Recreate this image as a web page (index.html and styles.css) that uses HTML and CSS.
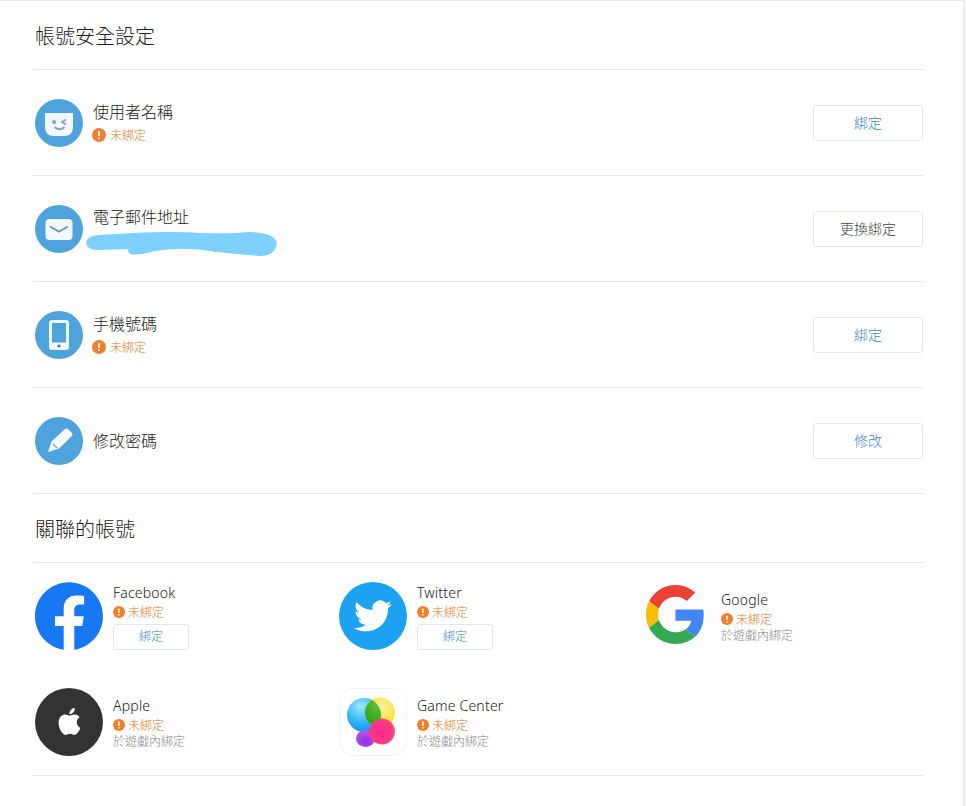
FILE: index.html
```html
<!DOCTYPE html>
<html lang="zh-Hant">
<head>
    <meta charset="UTF-8">
    <meta name="viewport" content="width=device-width, initial-scale=1.0">
    <title>帳號安全設定</title>
    <link rel="stylesheet" href="styles.css">
</head>
<body>
    <svg class="defs" width="0" height="0">
        <symbol id="warn" viewBox="0 0 14 14">
            <circle cx="7" cy="7" r="7" fill="#f07f30"/>
            <rect x="6.100" y="3" width="1.800" height="5.200" rx=".8" fill="#fff"/>
            <circle cx="7" cy="10.200" r="1" fill="#fff"/>
        </symbol>
    </svg>
    <div class="panel">
        <h2 class="sectionTitle">帳號安全設定</h2>
        <div class="bindRow">
            <svg class="rowIcon" viewBox="0 0 48 48">
                <circle cx="24" cy="24" r="24" fill="#4fa3dc"/>
                <path d="M10 14h28v14q0 9-9 9H19q-9 0-9-9z" fill="#f0f8fd"/>
                <circle cx="19" cy="23" r="2" fill="#86a5bd"/>
                <path d="M31 20.500l-4 2.500 4 2.500M19.500 28q5 4.500 10 0" fill="none" stroke="#86a5bd" stroke-width="1.800"/>
            </svg>
            <div class="rowText">
                <p class="rowName">使用者名稱</p>
                <p class="status"><svg class="warnIcon"><use href="#warn"/></svg>未綁定</p>
            </div>
            <button class="btn">綁定</button>
        </div>
        <div class="bindRow">
            <svg class="rowIcon" viewBox="0 0 48 48">
                <circle cx="24" cy="24" r="24" fill="#4fa3dc"/>
                <rect x="10.500" y="14" width="27" height="21" rx="4" fill="#f0f8fd"/>
                <path d="M15 21.500l9 5 9-5" fill="none" stroke="#7396b3" stroke-width="2"/>
            </svg>
            <div class="rowText">
                <p class="rowName">電子郵件地址</p>
                <svg class="scribble" width="194" height="26" viewBox="0 0 194 26">
                    <path d="M1 11Q2 5 14 4L48 2Q90 0 115 2Q145 3 165 1Q190 2 192 12Q190 25 175 25L132 21Q100 15 70 20Q52 25 45 23Q42 20 43 18L12 19Q2 19 1 11Z" fill="#7dd0ff"/>
                </svg>
            </div>
            <button class="btn btnGray">更換綁定</button>
        </div>
        <div class="bindRow">
            <svg class="rowIcon" viewBox="0 0 48 48">
                <circle cx="24" cy="24" r="24" fill="#4fa3dc"/>
                <rect x="14" y="9" width="20" height="30" rx="3" fill="#f0f8fd"/>
                <rect x="17" y="12" width="14" height="19.500" fill="#4fa3dc"/>
                <circle cx="24" cy="35" r="1.600" fill="#5d7f99"/>
            </svg>
            <div class="rowText">
                <p class="rowName">手機號碼</p>
                <p class="status"><svg class="warnIcon"><use href="#warn"/></svg>未綁定</p>
            </div>
            <button class="btn">綁定</button>
        </div>
        <div class="bindRow">
            <svg class="rowIcon" viewBox="0 0 48 48">
                <circle cx="24" cy="24" r="24" fill="#4fa3dc"/>
                <path d="M13 35l3.500-10.500L29.500 12.500q2-1.800 4 0l3 3q1.800 2 0 4L24 31.500z" fill="#f4fafd"/>
                <path d="M18 27l4 4" stroke="#7fa3c0" stroke-width="1.200"/>
            </svg>
            <div class="rowText">
                <p class="rowName">修改密碼</p>
            </div>
            <button class="btn">修改</button>
        </div>

        <h2 class="sectionTitle">關聯的帳號</h2>
        <div class="socialGrid">
            <div class="socialItem">
                <svg class="socialIcon" viewBox="0 0 24 24">
                    <path fill="#1877f2" d="M24 12.073c0-6.627-5.373-12-12-12s-12 5.373-12 12c0 5.990 4.388 10.954 10.125 11.854v-8.385H7.078v-3.470h3.047V9.430c0-3.007 1.792-4.669 4.533-4.669 1.312 0 2.686.235 2.686.235v2.953H15.830c-1.491 0-1.956.925-1.956 1.874v2.250h3.328l-.532 3.470h-2.796v8.385C19.612 23.027 24 18.062 24 12.073z"/>
                </svg>
                <div class="socialText">
                    <p class="socialName">Facebook</p>
                    <p class="status"><svg class="warnIcon"><use href="#warn"/></svg>未綁定</p>
                    <button class="btn btnSmall">綁定</button>
                </div>
            </div>
            <div class="socialItem">
                <svg class="socialIcon" viewBox="0 0 68 68">
                    <circle cx="34" cy="34" r="34" fill="#1da1f2"/>
                    <path transform="translate(15 15) scale(1.580)" fill="#fff" d="M23.953 4.570a10 10 0 01-2.825.775 4.958 4.958 0 002.163-2.723c-.951.555-2.005.959-3.127 1.184a4.920 4.920 0 00-8.384 4.482C7.690 8.095 4.067 6.130 1.640 3.162a4.822 4.822 0 00-.666 2.475c0 1.710.870 3.213 2.188 4.096a4.904 4.904 0 01-2.228-.616v.060a4.923 4.923 0 003.946 4.827 4.996 4.996 0 01-2.212.085 4.936 4.936 0 004.604 3.417 9.867 9.867 0 01-6.102 2.105c-.390 0-.779-.023-1.170-.067a13.995 13.995 0 007.557 2.209c9.053 0 13.998-7.496 13.998-13.985 0-.210 0-.420-.015-.630A9.935 9.935 0 0024 4.590z"/>
                </svg>
                <div class="socialText">
                    <p class="socialName">Twitter</p>
                    <p class="status"><svg class="warnIcon"><use href="#warn"/></svg>未綁定</p>
                    <button class="btn btnSmall">綁定</button>
                </div>
            </div>
            <div class="socialItem">
                <svg class="socialIcon" viewBox="-2.400 -2.400 55.300 55.300">
                    <path fill="#ea4335" d="M24 9.500c3.540 0 6.710 1.220 9.210 3.600l6.850-6.850C35.900 2.380 30.470 0 24 0 14.620 0 6.510 5.380 2.560 13.220l7.980 6.190C12.430 13.720 17.740 9.500 24 9.500z"/>
                    <path fill="#4285f4" d="M46.980 24.550c0-1.570-.150-3.090-.380-4.550H24v9.020h12.940c-.580 2.960-2.260 5.480-4.780 7.180l7.730 6c4.510-4.180 7.090-10.360 7.090-17.650z"/>
                    <path fill="#fbbc05" d="M10.530 28.590c-.480-1.450-.760-2.990-.760-4.590s.270-3.140.760-4.590l-7.980-6.190C.920 16.460 0 20.120 0 24c0 3.880.920 7.540 2.560 10.780l7.970-6.190z"/>
                    <path fill="#34a853" d="M24 48c6.480 0 11.930-2.130 15.890-5.810l-7.730-6c-2.150 1.450-4.920 2.300-8.160 2.300-6.260 0-11.570-4.220-13.470-9.910l-7.980 6.190C6.510 42.620 14.620 48 24 48z"/>
                </svg>
                <div class="socialText">
                    <p class="socialName">Google</p>
                    <p class="status"><svg class="warnIcon"><use href="#warn"/></svg>未綁定</p>
                    <p class="hint">於遊戲內綁定</p>
                </div>
            </div>
            <div class="socialItem">
                <svg class="socialIcon" viewBox="0 0 68 68">
                    <circle cx="34" cy="34" r="34" fill="#333"/>
                    <path transform="translate(21 20) scale(1.120)" fill="#fff" d="M12.152 6.896c-.948 0-2.415-1.078-3.960-1.040-2.040.027-3.910 1.183-4.961 3.014-2.117 3.675-.546 9.103 1.519 12.090 1.013 1.454 2.208 3.090 3.792 3.039 1.520-.065 2.090-.987 3.935-.987 1.831 0 2.350.987 3.960.948 1.637-.026 2.676-1.480 3.676-2.948 1.156-1.688 1.636-3.325 1.662-3.415-.039-.013-3.182-1.221-3.220-4.857-.026-3.040 2.480-4.494 2.597-4.559-1.429-2.090-3.623-2.324-4.390-2.376-2-.156-3.675 1.090-4.610 1.090zM15.530 3.830c.843-1.012 1.400-2.427 1.245-3.830-1.207.052-2.662.805-3.532 1.818-.780.896-1.454 2.338-1.273 3.714 1.338.104 2.715-.688 3.559-1.701"/>
                </svg>
                <div class="socialText">
                    <p class="socialName">Apple</p>
                    <p class="status"><svg class="warnIcon"><use href="#warn"/></svg>未綁定</p>
                    <p class="hint">於遊戲內綁定</p>
                </div>
            </div>
            <div class="socialItem">
                <svg class="socialIcon" viewBox="0 0 68 68">
                    <defs>
                        <radialGradient id="gcBlue" cx=".4" cy=".25" r=".8"><stop offset="0" stop-color="#9fe9ff"/><stop offset=".6" stop-color="#2cb2fb"/><stop offset="1" stop-color="#0f8ff0"/></radialGradient>
                        <radialGradient id="gcYellow" cx=".6" cy=".3" r=".8"><stop offset="0" stop-color="#fff0a0"/><stop offset="1" stop-color="#f5d800"/></radialGradient>
                        <radialGradient id="gcGreen" cx=".5" cy=".2" r=".9"><stop offset="0" stop-color="#6bc43c"/><stop offset="1" stop-color="#159a0a"/></radialGradient>
                        <radialGradient id="gcPink" cx=".45" cy=".5" r=".65"><stop offset="0" stop-color="#ff2591"/><stop offset=".7" stop-color="#fb3d83"/><stop offset="1" stop-color="#fb8a5e"/></radialGradient>
                        <radialGradient id="gcPurple" cx=".5" cy=".7" r=".7"><stop offset="0" stop-color="#8f2de6"/><stop offset="1" stop-color="#b45ae8"/></radialGradient>
                        <clipPath id="gcClip"><circle cx="25" cy="27" r="17"/></clipPath>
                    </defs>
                    <rect x=".500" y=".500" width="67" height="67" rx="14" fill="#fff" stroke="#f2f2f2"/>
                    <circle cx="25" cy="27" r="17" fill="url(#gcBlue)"/>
                    <circle cx="41" cy="24.500" r="15" fill="url(#gcYellow)"/>
                    <circle cx="41" cy="24.500" r="15" fill="url(#gcGreen)" clip-path="url(#gcClip)"/>
                    <ellipse cx="26.500" cy="50.500" rx="9.500" ry="8.500" fill="url(#gcPurple)"/>
                    <circle cx="43" cy="43.500" r="13" fill="url(#gcPink)"/>
                </svg>
                <div class="socialText">
                    <p class="socialName">Game Center</p>
                    <p class="status"><svg class="warnIcon"><use href="#warn"/></svg>未綁定</p>
                    <p class="hint">於遊戲內綁定</p>
                </div>
            </div>
        </div>
    </div>
</body>
</html>
```

FILE: styles.css
```css
* {
    box-sizing: border-box;
}
html, body {
    height: 100%;
}
body {
    margin: 0;
    background-color: #f6f6f6;
    font-family: "Noto Sans", "Noto Sans CJK TC", sans-serif;
    font-weight: 300;
    color: #222;
}
p {
    margin: 0;
}
.defs {
    position: absolute;
}
.panel {
    width: 964px;
    min-height: 100%;
    padding: 0 40px 0 33px;
    background-color: white;
    border-top: 1px solid #e6e6e6;
    border-right: 1px solid #e6e6e6;
}
.sectionTitle {
    height: 69px;
    margin: 0;
    padding: 4px 0 0 2px;
    display: flex;
    align-items: center;
    font-size: 20px;
    font-weight: 300;
    line-height: 1;
    border-bottom: 1px solid #e6e6e6;
}
.bindRow {
    height: 106px;
    padding-left: 2px;
    display: flex;
    align-items: center;
    border-bottom: 1px solid #e6e6e6;
}
.rowIcon {
    width: 48px;
    height: 48px;
    flex-shrink: 0;
}
.rowText {
    margin-left: 10px;
    flex: 1;
}
.rowName {
    font-size: 16px;
    line-height: 24px;
}
.status {
    display: flex;
    align-items: center;
    gap: 3px;
    height: 18px;
    font-size: 12px;
    color: #d97a2a;
}
.rowText .status {
    gap: 4px;
    margin: 2px 0;
}
.warnIcon {
    width: 14px;
    height: 14px;
    margin-left: -1px;
}
.socialText .warnIcon {
    width: 12px;
    height: 12px;
    margin-left: 0;
}
.scribble {
    display: block;
    margin: 2px 0 -4px -8px;
}
.btn {
    width: 110px;
    height: 36px;
    padding: 0 0 2px;
    font-family: inherit;
    font-weight: 300;
    font-size: 14px;
    color: #3f85c2;
    background-color: white;
    border: 1px solid #e6e6e6;
    border-radius: 3px;
}
.btnGray {
    color: #444;
}
.btnSmall {
    display: block;
    width: 76px;
    height: 26px;
    margin-top: 3px;
    font-size: 12px;
}
.socialGrid {
    display: grid;
    grid-template-columns: repeat(3, 304px);
    row-gap: 38px;
    padding: 19px 0 19px 2px;
    border-bottom: 1px solid #e6e6e6;
}
.socialItem {
    display: flex;
    align-items: center;
    height: 68px;
}
.socialIcon {
    width: 68px;
    height: 68px;
    flex-shrink: 0;
}
.socialText {
    margin-left: 10px;
}
.socialName {
    font-size: 14px;
    line-height: 21px;
    letter-spacing: .2px;
}
.hint {
    font-size: 12px;
    line-height: 16px;
    color: #888;
}
```
